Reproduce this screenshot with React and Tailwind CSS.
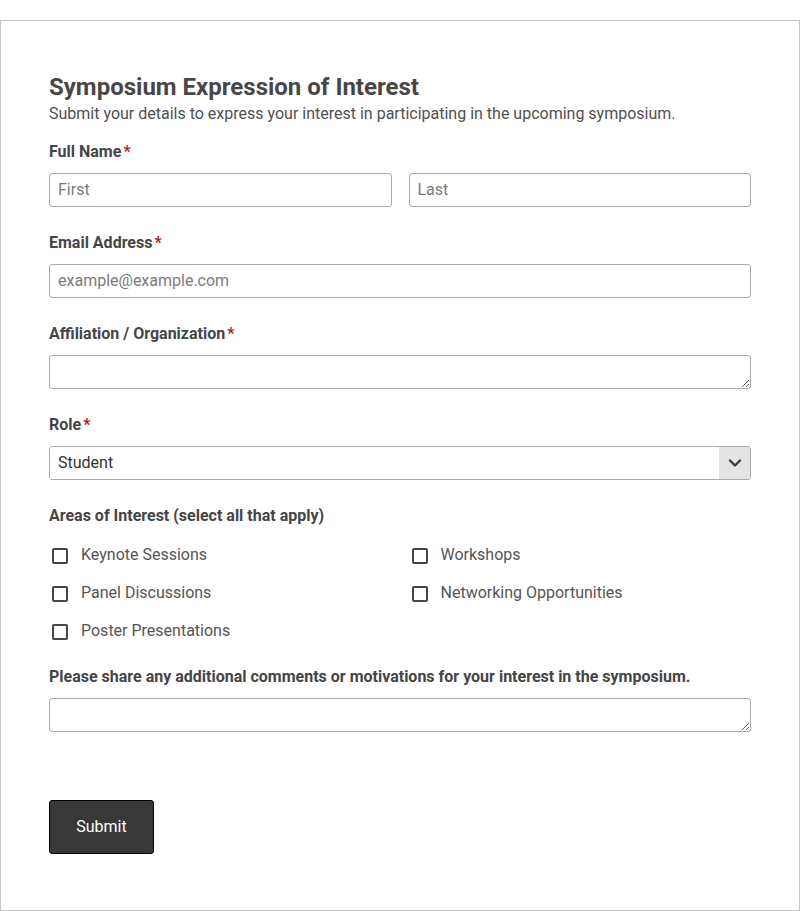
import { useState } from "react";

function Label({ children, required }) {
  return (
    <label className="block pt-px text-[16px] leading-6 font-bold text-[#454545]">
      {children}
      {required && <span className="ml-[2px] text-[#c01818]">*</span>}
    </label>
  );
}

const inputCls =
  "block w-full h-[34px] px-2 pb-[2px] border border-[#ababab] rounded-[3px] bg-white text-[16px] text-[#333] placeholder-[#7b7b7b] outline-none";

function Check({ label }) {
  const [on, setOn] = useState(false);
  return (
    <label className="flex items-center h-6 cursor-pointer" onClick={() => setOn(!on)}>
      <span className="ml-[3px] mt-px w-4 h-4 border-2 border-[#474747] rounded-[2px] flex items-center justify-center bg-white">
        {on && <span className="w-2 h-2 bg-[#474747]" />}
      </span>
      <span className="ml-[13px] text-[16px] text-[#555]">{label}</span>
    </label>
  );
}

function App() {
  const [role, setRole] = useState("Student");

  return (
    <div className="bg-white pt-5 font-['Roboto',sans-serif]">
      <form
        onSubmit={(e) => e.preventDefault()}
        className="border border-[#c6c6c6] px-12 pt-[51px] pb-[56px]"
      >
        <h1 className="text-[24px] leading-[30px] font-bold text-[#474747]">
          Symposium Expression of Interest
        </h1>
        <p className="text-[16px] leading-6 text-[#505050]">
          Submit your details to express your interest in participating in the upcoming symposium.
        </p>

        <div className="mt-[13px]">
          <Label required>Full Name</Label>
          <div className="mt-[9px] grid grid-cols-2 gap-x-[17px]">
            <input className={inputCls} placeholder="First" />
            <input className={inputCls} placeholder="Last" />
          </div>
        </div>

        <div className="mt-[23px]">
          <Label required>Email Address</Label>
          <input className={inputCls + " mt-[9px]"} placeholder="example@example.com" />
        </div>

        <div className="mt-[23px]">
          <Label required>Affiliation / Organization</Label>
          <textarea rows={1} className={inputCls + " mt-[9px] py-1 resize-y"} />
        </div>

        <div className="mt-[23px]">
          <Label required>Role</Label>
          <div className="mt-[9px] flex h-[34px] border border-[#ababab] rounded-[3px] overflow-hidden">
            <select
              value={role}
              onChange={(e) => setRole(e.target.value)}
              className="flex-1 appearance-none bg-white px-2 text-[16px] text-[#333] outline-none"
            >
              <option>Student</option>
              <option>Researcher</option>
              <option>Faculty</option>
              <option>Industry Professional</option>
              <option>Other</option>
            </select>
            <span className="w-[31px] bg-[#e4e4e4] flex items-center justify-center">
              <svg width="14" height="14" viewBox="0 0 14 14" fill="none">
                <path d="M2 4.5 L7 9.5 L12 4.5" stroke="#3a3a3a" strokeWidth="2.4" strokeLinecap="round" strokeLinejoin="round" />
              </svg>
            </span>
          </div>
        </div>

        <div className="mt-[23px]">
          <Label>Areas of Interest (select all that apply)</Label>
          <div className="mt-[15px] grid grid-cols-2 gap-x-[17px] gap-y-[14px]">
            <Check label="Keynote Sessions" />
            <Check label="Workshops" />
            <Check label="Panel Discussions" />
            <Check label="Networking Opportunities" />
            <Check label="Poster Presentations" />
          </div>
        </div>

        <div className="mt-[21px]">
          <Label>Please share any additional comments or motivations for your interest in the symposium.</Label>
          <textarea rows={1} className={inputCls + " mt-[9px] py-1 resize-y"} />
        </div>

        <button
          type="submit"
          className="mt-[68px] w-[105px] h-[54px] bg-[#383838] border border-black rounded-[3px] text-white text-[16px]"
        >
          Submit
        </button>
      </form>
    </div>
  );
}

export default App;
